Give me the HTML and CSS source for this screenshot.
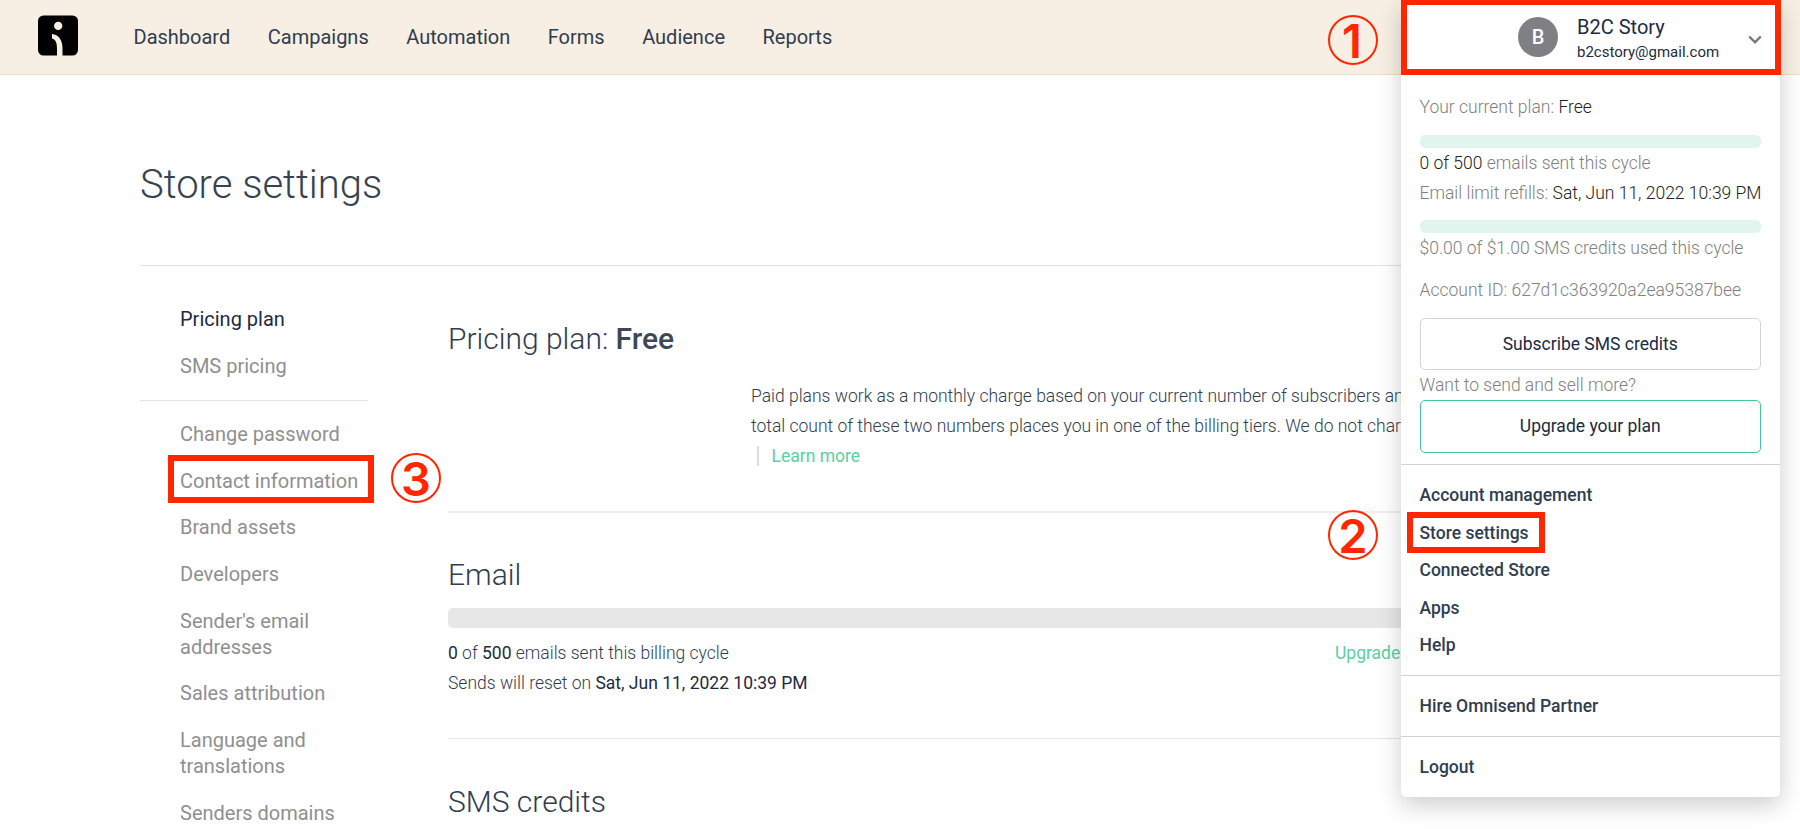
FILE: index.html
```html
<!DOCTYPE html>
<html lang="en">
<head>
<meta charset="utf-8">
<title>Store settings</title>
<link rel="stylesheet" href="styles.css">
</head>
<body>
<div class="page">
  <header class="topbar">
    <svg class="logo" viewBox="0 0 40 41">
      <rect y="0.500" width="40" height="40" rx="5.5" fill="#000"/>
      <circle cx="20.200" cy="10.900" r="4.200" fill="#f8efe4"/>
      <path d="M14 19 C20.500 19.400 24.500 25.200 24.500 33 V41 H19 V34 C19 28 18 24.700 14 23.400 Z" fill="#f8efe4"/>
    </svg>
    <nav class="nav">
      <a>Dashboard</a><a>Campaigns</a><a>Automation</a><a>Forms</a><a>Audience</a><a>Reports</a>
    </nav>
  </header>

  <div class="content">
    <h1 class="title">Store settings</h1>
    <div class="columns">
      <aside class="sidebar">
        <ul class="side-group">
          <li class="active">Pricing plan</li>
          <li>SMS pricing</li>
        </ul>
        <ul class="side-group">
          <li>Change password</li>
          <li class="marked">Contact information<span class="mark mark-contact"></span></li>
          <li>Brand assets</li>
          <li>Developers</li>
          <li>Sender's email addresses</li>
          <li>Sales attribution</li>
          <li>Language and translations</li>
          <li>Senders domains</li>
        </ul>
      </aside>
      <main class="main">
        <section class="section section-plan">
          <h2>Pricing plan: <b>Free</b></h2>
          <div class="plan-text">
            <p>Paid plans work as a monthly charge based on your current number of subscribers and</p>
            <p>total count of these two numbers places you in one of the billing tiers. We do not charge</p>
            <p class="learn"><a>Learn more</a></p>
          </div>
        </section>
        <section class="section section-email">
          <h2>Email</h2>
          <div class="bar"></div>
          <div class="usage">
            <p><b>0</b> of <b>500</b> emails sent this billing cycle</p>
            <a>Upgrade</a>
          </div>
          <p class="reset">Sends will reset on <b>Sat, Jun 11, 2022 10:39 PM</b></p>
        </section>
        <section class="section">
          <h2>SMS credits</h2>
        </section>
      </main>
    </div>
  </div>

  <div class="panel">
    <div class="account">
      <span class="avatar">B</span>
      <div class="who">
        <div class="name">B2C Story</div>
        <div class="email">b2cstory@gmail.com</div>
      </div>
      <svg class="chevron" viewBox="0 0 14 10"><path d="M1.200 1.500 L7 7.300 L12.800 1.500" fill="none" stroke="#77777b" stroke-width="2.400"/></svg>
    </div>
    <div class="plan">
      <p>Your current plan: <b>Free</b></p>
      <div class="meter"></div>
      <p><b>0 of 500</b> emails sent this cycle</p>
      <p class="refill">Email limit refills: <b>Sat, Jun 11, 2022 10:39 PM</b></p>
      <div class="meter"></div>
      <p>$0.00 of $1.00 SMS credits used this cycle</p>
      <p class="account-id">Account ID: 627d1c363920a2ea95387bee</p>
      <button class="btn">Subscribe SMS credits</button>
      <p>Want to send and sell more?</p>
      <button class="btn btn-green">Upgrade your plan</button>
    </div>
    <ul class="menu">
      <li>Account management</li>
      <li class="marked">Store settings<span class="mark mark-store"></span></li>
      <li>Connected Store</li>
      <li>Apps</li>
      <li>Help</li>
    </ul>
    <ul class="menu"><li>Hire Omnisend Partner</li></ul>
    <ul class="menu"><li>Logout</li></ul>
  </div>

  <span class="step step-1">1</span>
  <span class="step step-2">2</span>
  <span class="step step-3">3</span>
</div>
</body>
</html>
```
FILE: styles.css
```css
* { box-sizing: border-box; margin: 0; padding: 0; }
body { font-family: Roboto, "Liberation Sans", sans-serif; color: #2f3d4f; background: #fff; }
ul { list-style: none; }
.page { position: relative; width: 1800px; height: 829px; overflow: hidden; }

.topbar { height: 75px; background: #f8efe4; border-bottom: 1px solid #f1dcc8; display: flex; align-items: flex-start; padding-left: 37.5px; }
.logo { width: 40px; height: 41px; margin-top: 15px; }
.nav { display: flex; gap: 37.5px; margin-left: 56px; padding-top: 22px; font-size: 20px; line-height: 30px; }

.content { padding: 0 140px; }
.title { font-size: 40px; font-weight: 300; line-height: 50px; padding: 85px 0 55px; border-bottom: 1px solid #e2e2e3; color: #36424f; }
.columns { display: flex; gap: 80px; }

.sidebar { width: 228px; flex: none; padding-top: 29px; font-size: 20px; line-height: 26px; color: #8f8f8f; }
.side-group { padding-left: 40px; display: flex; flex-direction: column; gap: 20.65px; }
.side-group .active { color: #1c2b42; }
.side-group:first-child { padding-top: 11px; padding-bottom: 21.500px; border-bottom: 1px solid #e5e5e5; }
.side-group:last-child { padding-top: 20px; }
.marked { position: relative; }

.main { flex: 1; min-width: 0; font-size: 17.5px; font-weight: 300; line-height: 30px; }
.section { border-bottom: 1px solid #e5e5e6; padding: 43px 0 40px; }
.section h2 { font-size: 30px; font-weight: 300; line-height: 40px; }
.section b { font-weight: 400; color: #1c2b42; }
.section h2 b { font-weight: 500; color: #3c4856; }
.section-plan { padding-top: 53px; border-bottom: 2px solid #eee; }
.section-email { padding-top: 42px; }
.plan-text { margin: 22px 0 0 303px; white-space: nowrap; overflow: hidden; }
.section a { font-weight: 400; color: #5bcfa4; }
.learn { display: flex; align-items: center; height: 30px; }
.learn a { border-left: 2px solid #dcdcdc; margin-left: 6px; padding-left: 12.5px; line-height: 20px; }
.bar { height: 20px; margin: 12.500px 0 10px; background: #e7e7e7; border-radius: 5px; }
.usage { display: flex; justify-content: space-between; }
.usage a { width: 325px; }

.panel { position: absolute; left: 1401px; top: 0; width: 379px; height: 797px; background: #fff; border-radius: 0 0 5px 5px; box-shadow: 0 8px 24px rgba(0,0,0,.2); }
.account { width: 380px; height: 75px; border: 6px solid #ff2600; border-top-width: 5px; display: flex; align-items: flex-start; padding: 12px 13px 0 111px; }
.avatar { width: 40px; height: 40px; border-radius: 50%; background: #808084; color: #fff; font-size: 20px; font-weight: 500; line-height: 41px; text-align: center; }
.who { margin-left: 19px; color: #1c2b42; flex: 1; }
.name { font-size: 20px; line-height: 25px; margin-top: -2px; }
.email { font-size: 15px; line-height: 25px; }
.chevron { width: 14px; height: 10px; margin-top: 18px; }

.plan { padding: 17px 19px 11.500px 18.500px; font-size: 17.5px; font-weight: 300; line-height: 30px; color: #808080; white-space: nowrap; }
.plan b { font-weight: 300; color: #222; }
.meter { height: 12.500px; margin-top: 12.500px; background: #e1f5ed; border-radius: 5px; }
.meter:nth-of-type(1) { margin-top: 13px; }
.account-id { margin: 12.500px 0; }
.btn { display: block; width: 341.500px; height: 52.500px; background: #fff; border: 1px solid #d5d5d5; border-radius: 5px; font: 400 17.500px/30px Roboto, sans-serif; color: #1c2b42; }
.btn-green { border-color: #46c699; }
.menu { border-top: 1px solid #d3d3d3; padding: 12px 19px 10.500px 18.500px; font-size: 17.500px; font-weight: 500; line-height: 37.500px; }

.mark { position: absolute; border: 6px solid #ff2600; }
.mark-contact { left: -12px; top: -13px; width: 206px; height: 48px; }
.mark-store { left: -12.500px; top: -3px; width: 138px; height: 41px; }
.step { position: absolute; width: 50px; height: 50px; border: 2px solid #ff2600; border-radius: 50%; color: #ff2600; font: 600 47px/47px Inter, "Liberation Sans", sans-serif; text-align: center; }
.step-1 { left: 1328px; top: 15px; text-indent: -2px; }
.step-2 { left: 1328px; top: 510px; }
.step-3 { left: 391px; top: 453px; }
```
